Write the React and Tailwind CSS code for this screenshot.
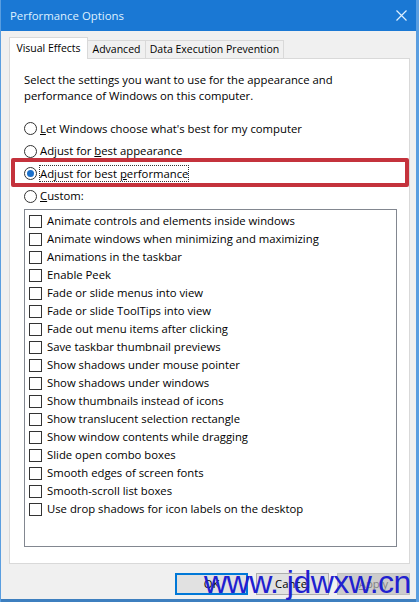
import { useState } from 'react';

const effects = [
  'Animate controls and elements inside windows',
  'Animate windows when minimizing and maximizing',
  'Animations in the taskbar',
  'Enable Peek',
  'Fade or slide menus into view',
  'Fade or slide ToolTips into view',
  'Fade out menu items after clicking',
  'Save taskbar thumbnail previews',
  'Show shadows under mouse pointer',
  'Show shadows under windows',
  'Show thumbnails instead of icons',
  'Show translucent selection rectangle',
  'Show window contents while dragging',
  'Slide open combo boxes',
  'Smooth edges of screen fonts',
  'Smooth-scroll list boxes',
  'Use drop shadows for icon labels on the desktop',
];

function Radio({ checked }) {
  return (
    <span className="w-[13px] h-[13px] rounded-full border border-[#333] bg-white flex items-center justify-center flex-shrink-0">
      {checked && <span className="w-[7px] h-[7px] rounded-full bg-[#1a6fc9]" />}
    </span>
  );
}

export default function App() {
  const [mode] = useState(2);

  return (
    <div className="relative w-[419px] h-[602px] overflow-hidden bg-[#f0f0f0] border-l border-r-[3px] border-[#5a9ee0] text-black font-['Open_Sans',sans-serif] text-[11.3px]">
      {/* Title bar */}
      <div className="h-[31px] bg-[#1a78d4] flex items-center justify-between pl-[9px] pr-[9px]">
        <span className="text-[#dff0ff] text-[11.4px]">Performance Options</span>
        <svg width="11" height="11" viewBox="0 0 11 11">
          <path d="M0.5 0.5 L10.5 10.5 M10.5 0.5 L0.5 10.5" stroke="#dff0ff" strokeWidth="1.2" />
        </svg>
      </div>

      {/* Tabs */}
      <div className="flex items-end pl-[8px] pt-[5px] h-[27px] text-[10.5px]">
        <div className="h-[22px] w-[79px] justify-center bg-white border border-b-0 border-[#d9d9d9] flex items-center relative z-10 -mb-px">
          Visual Effects
        </div>
        <div className="h-[18px] w-[58px] justify-center border border-l-0 border-b-0 border-[#d9d9d9] flex items-center">Advanced</div>
        <div className="h-[18px] w-[138px] justify-center border border-l-0 border-b-0 border-[#d9d9d9] flex items-center">Data Execution Prevention</div>
      </div>

      {/* Panel */}
      <div className="mx-[8px] mr-[6px] h-[506px] bg-white border border-[#d9d9d9] pl-[14px] pr-[12px] pt-[13px] leading-[16px]">
        <p>Select the settings you want to use for the appearance and<br />performance of Windows on this computer.</p>

        <div className="mt-[13px] flex flex-col">
          <label className="h-[23px] flex items-center gap-[3px]">
            <Radio checked={mode === 0} />
            <span><u>L</u>et Windows choose what's best for my computer</span>
          </label>
          <label className="h-[22px] flex items-center gap-[3px]">
            <Radio checked={mode === 1} />
            <span>Adjust for <u>b</u>est appearance</span>
          </label>
          <label className="h-[23px] flex items-center gap-[3px]">
            <Radio checked={mode === 2} />
            <span className="outline-1 outline-dotted outline-[#333] leading-[15px]">Adjust for best <u>p</u>erformance</span>
          </label>
          <label className="h-[22px] flex items-center gap-[3px]">
            <Radio checked={mode === 3} />
            <span><u>C</u>ustom:</span>
          </label>
        </div>

        {/* List box */}
        <div className="mt-[2px] w-[373px] h-[338px] border border-[#828790] pt-[2px] pl-[4px]">
          {effects.map((e) => (
            <div key={e} className="h-[18px] flex items-center gap-[5px]">
              <span className="w-[13px] h-[13px] border border-[#333] bg-white flex-shrink-0" />
              <span className="whitespace-nowrap">{e}</span>
            </div>
          ))}
        </div>
      </div>

      {/* Buttons */}
      <div className="flex justify-end gap-[8px] pr-[6px] pt-[9px]">
        <button className="w-[73px] h-[22px] bg-[#e1e1e1] border-2 border-[#0078d7]">OK</button>
        <button className="w-[73px] h-[22px] bg-[#e1e1e1] border border-[#adadad]">Cancel</button>
        <button className="w-[73px] h-[22px] bg-[#cccccc] border border-[#bfbfbf] text-[#838383]"><u>A</u>pply</button>
      </div>

      <div className="absolute left-0 right-0 bottom-0 h-[3px] bg-[#3d7fbf]" />

      {/* Red highlight */}
      <div className="absolute left-[10px] top-[158px] w-[398px] h-[29px] border-[4px] border-[#c4323c] rounded-[2px]" />

      {/* Watermark */}
      <div className="absolute left-[203px] top-[564px] text-[#2020d0] text-[32px] leading-[36px] font-['Liberation_Sans',sans-serif] tracking-[-0.5px] whitespace-nowrap">
        www. jdwxw.cn
      </div>
    </div>
  );
}
